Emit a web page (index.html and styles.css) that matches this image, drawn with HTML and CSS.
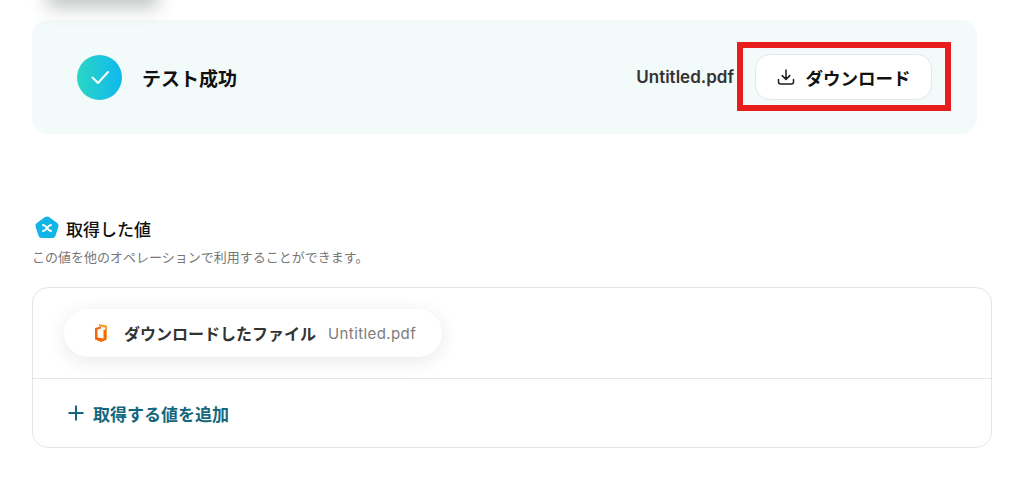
FILE: index.html
```html
<!DOCTYPE html>
<html lang="ja">
<head>
    <meta charset="UTF-8">
    <meta name="viewport" content="width=device-width, initial-scale=1.0">
    <title>テスト成功</title>
    <link rel="stylesheet" href="styles.css">
</head>
<body>
    <div class="top-shadow"></div>

    <div class="container">
        <div class="result-card">
            <div class="result-status">
                <div class="check-icon">
                    <svg width="20" height="20" viewBox="0 0 20 20" fill="none">
                        <path d="M2.5 10.5 L8 16 L18 5" stroke="#fff" stroke-width="2" stroke-linecap="round" stroke-linejoin="round"/>
                    </svg>
                </div>
                <span class="result-title">テスト成功</span>
            </div>
            <div class="result-file">
                <span class="file-name">Untitled.pdf</span>
                <button class="download-btn">
                    <svg width="18" height="18" viewBox="0 0 18 18" fill="none">
                        <path d="M9 2 V11 M5.2 7.6 L9 11.4 L12.8 7.6 M1.5 11.5 V14 Q1.5 16 3.5 16 H14.5 Q16.5 16 16.5 14 V11.5" stroke="#1c1c1c" stroke-width="1.5" stroke-linecap="round" stroke-linejoin="round"/>
                    </svg>
                    <span>ダウンロード</span>
                </button>
                <div class="highlight"></div>
            </div>
        </div>

        <div class="values-head">
            <svg class="values-icon" width="26" height="26" viewBox="0 0 26 26">
                <path d="M11 2 Q13 0.8 15 2 L23.5 8.2 Q25 9.4 24.5 11.4 L21.4 21 Q20.8 23 18.6 23 H7.4 Q5.2 23 4.6 21 L1.5 11.4 Q1 9.4 2.5 8.2 Z" fill="#12b5e8"/>
                <path d="M9 10 Q11.5 10.5 13 13 Q14.5 15.5 17 16 M17 10 Q14.5 10.5 13 13 Q11.5 15.5 9 16" stroke="#fff" stroke-width="2" fill="none" stroke-linecap="round"/>
            </svg>
            <h2 class="values-title">取得した値</h2>
        </div>
        <p class="values-desc">この値を他のオペレーションで利用することができます。</p>

        <div class="values-box">
            <div class="values-list">
                <div class="value-pill">
                    <svg class="office-icon" width="14" height="20" viewBox="0 0 14 20">
                        <path d="M5 1 L13 2.5 V16.5 L11 17 V4.5 L5 3.5 Z" fill="#f9a13a"/>
                        <path d="M1 5 L7 3.5 V5.5 L3.5 6.5 V14.5 L9.5 15.5 V7 L12 6.5 V17 L7 19 L1 16.5 Z" fill="#f4670f"/>
                    </svg>
                    <span class="pill-label">ダウンロードしたファイル</span>
                    <span class="pill-value">Untitled.pdf</span>
                </div>
            </div>
            <div class="add-row">
                <svg width="16" height="16" viewBox="0 0 16 16">
                    <path d="M8 0.5 V15.5 M0.5 8 H15.5" stroke="#14677d" stroke-width="2"/>
                </svg>
                <span>取得する値を追加</span>
            </div>
        </div>
    </div>
</body>
</html>
```

FILE: styles.css
```css
* {
    margin: 0;
    padding: 0;
    box-sizing: border-box;
    font-family: Inter, 'Noto Sans CJK JP', sans-serif;
}

body {
    background: #fff;
    color: #1c1c1c;
    height: 481px;
    overflow: hidden;
    position: relative;
}

.top-shadow {
    position: absolute;
    left: 55px;
    top: -30px;
    width: 95px;
    height: 30px;
    box-shadow: 0 0 18px 8px rgba(60, 70, 70, 0.3);
}

.container {
    width: 960px;
    margin-left: 32px;
    padding-top: 20px;
}

.result-card {
    width: 945px;
    height: 114px;
    padding: 0 45px;
    background: #f2fafa;
    border-radius: 16px;
    display: flex;
    align-items: center;
    justify-content: space-between;
}

.result-status {
    display: flex;
    align-items: center;
    gap: 20px;
}

.check-icon {
    width: 45px;
    height: 45px;
    border-radius: 50%;
    background: linear-gradient(90deg, #2bd6c4, #10b8ee);
    display: flex;
    align-items: center;
    justify-content: center;
}

.result-title {
    font-size: 19px;
    font-weight: 600;
    color: #111;
}

.result-file {
    display: flex;
    align-items: center;
    gap: 21px;
    position: relative;
}

.file-name {
    font-size: 17px;
    font-weight: 600;
    color: #333;
}

.download-btn {
    width: 177px;
    height: 46px;
    background: #fff;
    border: 1px solid #e2e8e8;
    border-radius: 15px;
    display: flex;
    align-items: center;
    justify-content: center;
    gap: 11px;
    font-size: 17.5px;
    font-weight: 600;
    color: #111;
}

.download-btn span {
    font: inherit;
}

.highlight {
    position: absolute;
    right: -19px;
    top: -12px;
    width: 214px;
    height: 69px;
    border: 6px solid #e61e1e;
}

.values-head {
    display: flex;
    align-items: center;
    gap: 6px;
    margin-top: 81px;
    height: 26px;
    padding-left: 2px;
}

.values-title {
    font-size: 17px;
    font-weight: 500;
    color: #111;
}

.values-desc {
    font-size: 13px;
    line-height: 20px;
    color: #777;
    margin-top: 6px;
}

.values-box {
    margin-top: 20px;
    height: 161px;
    border: 1px solid #e4e6e6;
    border-radius: 16px;
}

.values-list {
    height: 91px;
    padding: 21px 31px;
    border-bottom: 1px solid #e4e6e6;
}

.value-pill {
    width: 378px;
    height: 48px;
    padding-left: 30px;
    background: #fff;
    border-radius: 24px;
    box-shadow: 0 4px 20px rgba(0, 0, 0, 0.09);
    display: flex;
    align-items: center;
}

.pill-label {
    margin-left: 16px;
    font-size: 16px;
    font-weight: 600;
    color: #333;
}

.pill-value {
    margin-left: 12px;
    font-size: 15px;
    letter-spacing: 0.4px;
    color: #7c7c7c;
}

.add-row {
    height: 68px;
    padding-left: 35px;
    display: flex;
    align-items: center;
    gap: 9px;
    font-size: 17px;
    font-weight: 600;
    color: #14677d;
}
```
